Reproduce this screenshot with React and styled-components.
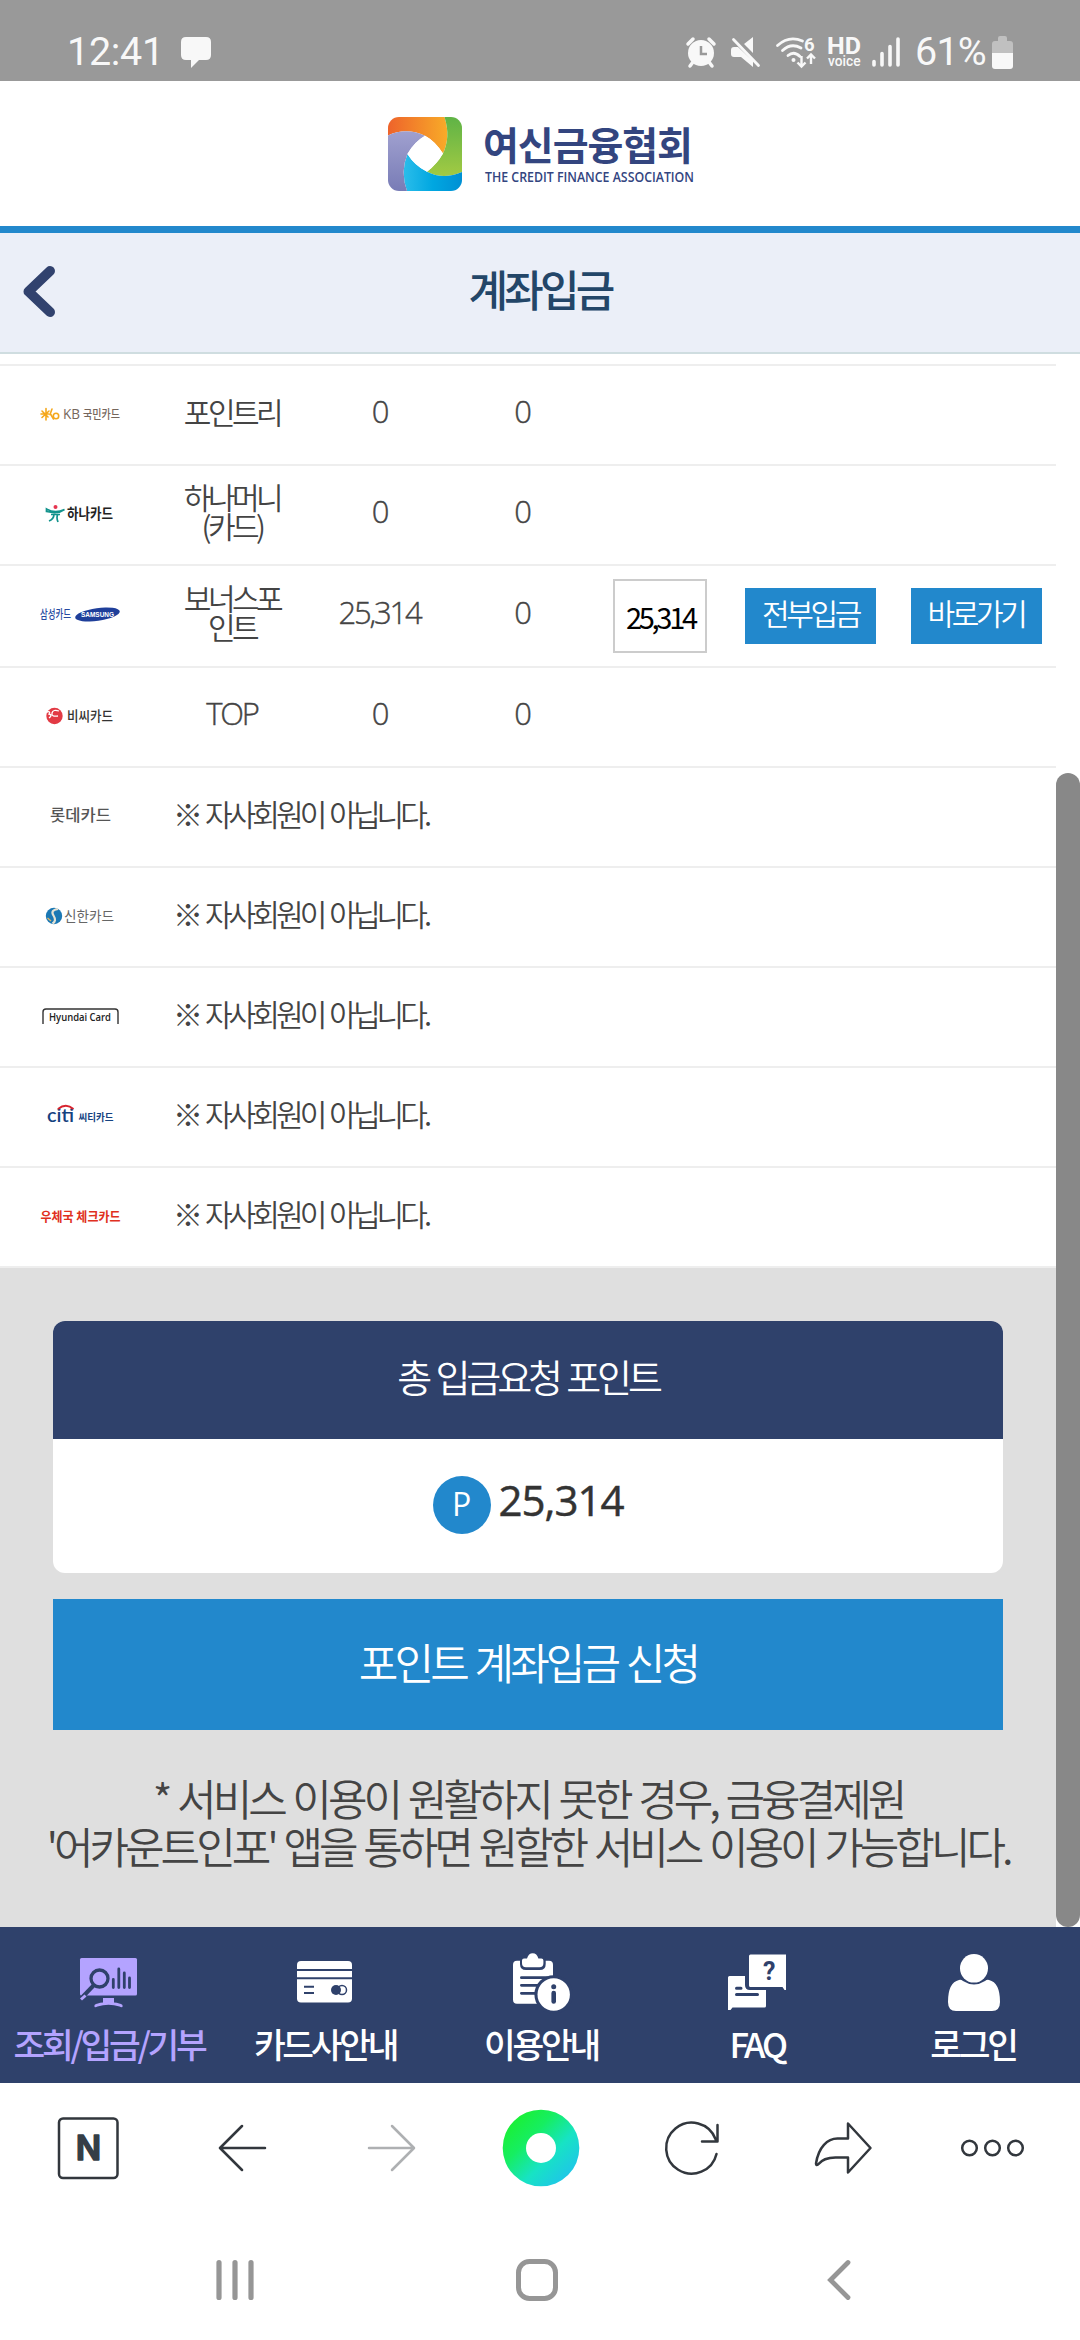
import React from "react";
import styled, { createGlobalStyle } from "styled-components";

const kr = `"Noto Sans CJK KR", sans-serif`;
const latin = `"Open Sans", "Noto Sans CJK KR", sans-serif`;

const GlobalStyle = createGlobalStyle`
  * { box-sizing: border-box; }
  body {
    margin: 0;
    background: #fff;
    font-family: ${kr};
  }
  svg { overflow: visible; }
`;

const Screen = styled.div`
  width: 1080px;
  height: 2340px;
  display: flex;
  flex-direction: column;
  background: #fff;
  overflow: hidden;
`;

/* ---------- status bar ---------- */

const StatusBar = styled.div`
  height: 81px;
  flex: none;
  display: flex;
  justify-content: space-between;
  padding: 30px 67px 0 67px;
  background: #999;
  color: #f8f8f8;
  font-family: Roboto, sans-serif;
`;

const StatusSide = styled.div`
  display: flex;
  height: 44px;
  align-items: center;
`;

const StatusText = styled.span`
  font-size: 39.5px;
  line-height: 44px;
  letter-spacing: ${(p) => p.$spacing || "0"};
`;

const StatusIcon = styled.svg`
  flex: none;
  margin-left: ${(p) => p.$left}px;
`;

/* ---------- header ---------- */

const Header = styled.header`
  height: 152px;
  flex: none;
  padding: 6px 0 0 6px;
  display: flex;
  justify-content: center;
  align-items: center;
  border-bottom: 7px solid #2288cc;
`;

const TitleBar = styled.div`
  height: 121px;
  flex: none;
  display: grid;
  grid-template-columns: 80px 1fr 80px;
  align-items: center;
  background: #ebeff8;
  border-bottom: 2px solid #cfdde0;
`;

const BackButton = styled.button`
  width: 80px;
  height: 60px;
  padding: 0 0 3px 20px;
  border: 0;
  background: none;
  display: flex;
  align-items: center;
`;

const Title = styled.h1`
  margin: 0;
  padding-bottom: 9px;
  font-size: 43px;
  font-weight: 500;
  line-height: 60px;
  letter-spacing: -3.8px;
  text-align: center;
  color: #234668;
`;

/* ---------- scroll area ---------- */

const ScrollArea = styled.main`
  height: 1573px;
  flex: none;
  display: flex;
`;

const Content = styled.div`
  width: 1056px;
  padding-top: 10px;
  display: flex;
  flex-direction: column;
`;

const ScrollTrack = styled.div`
  width: 24px;
  padding-top: 419px;
  display: flex;
`;

const ScrollThumb = styled.div`
  flex: 1;
  border-radius: 12px;
  background: #888;
`;

const CardList = styled.div`
  border-top: 2px solid #eee;
`;

const CardRow = styled.div`
  height: ${(p) => (p.$tall ? 102 : 100)}px;
  padding-left: 6px;
  display: grid;
  grid-template-columns: 148px 156px 139px 146px 130px 171px 160px;
  align-items: center;
  justify-items: center;
  border-bottom: 2px solid #eee;
`;

const Name = styled.div`
  padding-bottom: 8px;
  font-size: 30px;
  font-weight: 350;
  line-height: 29px;
  letter-spacing: -3.5px;
  text-align: center;
  white-space: pre-line;
  color: #444;
`;

const Value = styled.div`
  padding-bottom: 8px;
  font-family: ${latin};
  font-size: 31px;
  font-weight: 300;
  line-height: 40px;
  letter-spacing: -2.2px;
  color: #444;
  -webkit-text-stroke: 0.4px #444;
`;

const Notice = styled.div`
  grid-column: 2 / -1;
  justify-self: start;
  padding: 0 0 8px 19px;
  font-size: 30px;
  font-weight: 350;
  line-height: 40px;
  letter-spacing: -3.9px;
  word-spacing: 3px;
  color: #444;
`;

const AmountInput = styled.input`
  width: 94px;
  height: 74px;
  padding: 0 0 0 11px;
  border: 2px solid #ccc;
  border-radius: 0;
  outline: 0;
  background: #fff;
  font-family: ${kr};
  font-size: 29px;
  letter-spacing: -3.3px;
  color: #000;
`;

const SmallButton = styled.button`
  width: 131px;
  height: 56px;
  padding: 0 0 8px;
  border: 0;
  background: #2288cc;
  font-family: ${kr};
  font-size: 30px;
  font-weight: 350;
  line-height: 40px;
  letter-spacing: -3.4px;
  color: #fff;
`;

/* ---------- total ---------- */

const Summary = styled.section`
  flex: 1;
  padding: 53px 53px 0;
  background: #dfdfdf;
`;

const TotalCard = styled.div`
  border-radius: 12px;
  overflow: hidden;
  background: #fff;
`;

const TotalHead = styled.div`
  height: 118px;
  padding-bottom: 9px;
  display: flex;
  align-items: center;
  justify-content: center;
  background: #2f416b;
  font-size: 38px;
  font-weight: 350;
  letter-spacing: -4.1px;
  word-spacing: 3px;
  color: #fff;
`;

const TotalBody = styled.div`
  height: 134px;
  padding-bottom: 2px;
  display: flex;
  align-items: center;
  justify-content: center;
  gap: 8px;
`;

const PointBadge = styled.span`
  width: 58px;
  height: 58px;
  padding-bottom: 4px;
  display: flex;
  align-items: center;
  justify-content: center;
  border-radius: 50%;
  background: #2288cc;
  font-family: ${latin};
  font-size: 32px;
  color: #fff;
`;

const TotalValue = styled.strong`
  padding-bottom: 11px;
  font-family: ${latin};
  font-size: 42px;
  font-weight: 500;
  line-height: 50px;
  letter-spacing: -1px;
  color: #333;
  -webkit-text-stroke: 0.5px #333;
`;

const SubmitButton = styled.button`
  width: 100%;
  height: 131px;
  margin-top: 26px;
  padding: 0 0 8px;
  border: 0;
  background: #2288cc;
  font-family: ${kr};
  font-size: 43px;
  font-weight: 350;
  letter-spacing: -3.9px;
  word-spacing: 3px;
  color: #fff;
`;

const Guide = styled.p`
  margin: 43px -20px 0;
  font-size: 43px;
  font-weight: 350;
  line-height: 48px;
  letter-spacing: -4px;
  word-spacing: 3px;
  text-align: center;
  white-space: nowrap;
  color: #444;
`;

/* ---------- bottom bars ---------- */

const TabBar = styled.nav`
  height: 156px;
  flex: none;
  display: grid;
  grid-template-columns: repeat(5, 216px);
  background: #2f416b;
`;

const Tab = styled.a`
  padding: 25px 0 0 2px;
  display: flex;
  flex-direction: column;
  align-items: center;
  gap: 6px;
  font-size: 34.5px;
  font-weight: 500;
  line-height: 50px;
  letter-spacing: -3.3px;
  white-space: nowrap;
  color: ${(p) => (p.$active ? "#b4a3ff" : "#fff")};
`;

const BrowserBar = styled.div`
  height: 131px;
  flex: none;
  padding: 0 12px 2px 14px;
  display: grid;
  grid-template-columns: repeat(7, 1fr);
  align-items: center;
  justify-items: center;
`;

const SystemBar = styled.div`
  height: 126px;
  flex: none;
  padding: 5px 0 0 84px;
  display: grid;
  grid-template-columns: repeat(3, 302px);
  align-items: center;
  justify-items: center;
`;

const NAVY = "#2f416b";

/* ---------- logos ---------- */

const AssociationLogo = () => (
  <svg width="310" height="80" viewBox="0 0 310 80">
    <defs>
      <clipPath id="mark"><rect width="74" height="74" rx="11" /></clipPath>
      <linearGradient id="orange"><stop offset="0" stopColor="#ee632b" /><stop offset="1" stopColor="#f8ab28" /></linearGradient>
      <linearGradient id="green" x2="0" y2="1"><stop offset="0" stopColor="#5fb346" /><stop offset="1" stopColor="#a2ca43" /></linearGradient>
      <linearGradient id="blue"><stop offset="0" stopColor="#2bbdea" /><stop offset=".5" stopColor="#00a7e1" /><stop offset="1" stopColor="#0090d4" /></linearGradient>
      <linearGradient id="purple" x2="0" y2="1"><stop offset="0" stopColor="#a0a0cf" /><stop offset="1" stopColor="#787cb6" /></linearGradient>
    </defs>
    <g clipPath="url(#mark)">
      <rect width="74" height="74" fill="#fff" />
      <path d="M0 0H56.500C61 14 60 26 55 36.500Q47 24 37 18.700Q18 10 0 18.500Z" fill="url(#orange)" />
      <path d="M56.500 0H74V55Q55 63 39 54.700Q49 47 55 36.500C60 26 61 14 56.500 0Z" fill="url(#green)" />
      <path d="M74 55V74H19Q12 55 19.400 37Q27 49 39 54.700Q55 63 74 55Z" fill="url(#blue)" />
      <path d="M0 18.500Q18 10 37 18.700Q26 25 19.400 37Q12 55 19 74H0Z" fill="url(#purple)" />
      <path d="M37 18.700Q47 24 55 36.500Q49 47 39 54.700Q27 49 19.400 37Q26 25 37 18.700Z" fill="#fff" />
    </g>
    <text x="95" y="42.500" fontSize="39" fontWeight="700" textLength="210" fill="#33457f" fontFamily="Noto Sans CJK KR">여신금융협회</text>
    <text x="97" y="65" fontSize="14.500" fontWeight="600" textLength="209" lengthAdjust="spacingAndGlyphs" fill="#33457f" fontFamily="Open Sans">THE CREDIT FINANCE ASSOCIATION</text>
  </svg>
);

const LogoSvg = ({ children }) => (
  <svg width="84" height="26" viewBox="0 0 84 26" fontFamily="Noto Sans CJK KR">{children}</svg>
);

const logos = {
  kb: (
    <LogoSvg>
      <g stroke="#f5a81c" strokeWidth="1.600" fill="none" strokeLinecap="round">
        <path d="M4 9l6 6M4 15.500l7-6.500M8 6.500v11.500M3 12h7.500M14 7l-2 5.500M12.500 12l3 5" />
        <circle cx="18" cy="14" r="2.700" />
      </g>
      <text x="25" y="17" fontSize="14" textLength="17" lengthAdjust="spacingAndGlyphs" fill="#75665c" fontFamily="Open Sans">KB</text>
      <text x="45" y="16.500" fontSize="12.500" fontWeight="500" textLength="37" lengthAdjust="spacingAndGlyphs" fill="#75665c">국민카드</text>
    </LogoSvg>
  ),
  hana: (
    <LogoSvg>
      <circle cx="17.500" cy="5" r="2" fill="#e6344f" />
      <path d="M8.500 7Q17 12 26.500 7.500Q22 10.500 18.500 10.500Q15 11 8.500 9.500ZM13 12.500H22M16 12Q16 17 11 19M20 12Q18 15 20 20" stroke="#12938c" strokeWidth="1.700" fill="none" />
      <text x="29" y="17" fontSize="14.500" fontWeight="700" textLength="46" lengthAdjust="spacingAndGlyphs" fill="#222">하나카드</text>
    </LogoSvg>
  ),
  samsung: (
    <LogoSvg>
      <text x="2" y="16" fontSize="12.500" fontWeight="500" textLength="31" lengthAdjust="spacingAndGlyphs" fill="#2548a0">삼성카드</text>
      <ellipse cx="59.500" cy="11.500" rx="22.500" ry="6.300" transform="rotate(-8 59.500 11.500)" fill="#1f3f9a" />
      <text x="43" y="14.300" fontSize="7.500" fontWeight="700" textLength="33" lengthAdjust="spacingAndGlyphs" fill="#fff" fontFamily="Liberation Sans">SAMSUNG</text>
    </LogoSvg>
  ),
  bc: (
    <LogoSvg>
      <circle cx="16.500" cy="12" r="8.200" fill="#e23a44" />
      <path d="M21 7q-6-2-7 2t6 3M9 8q4-1 2 2q4 1 0 4" stroke="#fff" strokeWidth="1.300" fill="none" />
      <text x="29" y="17" fontSize="14" fontWeight="500" textLength="46" lengthAdjust="spacingAndGlyphs" fill="#333">비씨카드</text>
    </LogoSvg>
  ),
  lotte: (
    <LogoSvg>
      <text x="12" y="17" fontSize="15.500" fontWeight="500" textLength="61" lengthAdjust="spacingAndGlyphs" fill="#555">롯데카드</text>
    </LogoSvg>
  ),
  shinhan: (
    <LogoSvg>
      <circle cx="16" cy="12" r="8.200" fill="#1b78b4" />
      <path d="M20 5q-8 1-4.500 6.500t-1 8" stroke="#e5e2d4" strokeWidth="2.200" fill="none" />
      <path d="M9.500 14l3.500 3" stroke="#d8b36a" strokeWidth="1.500" />
      <text x="26" y="17" fontSize="14" textLength="50" lengthAdjust="spacingAndGlyphs" fill="#666">신한카드</text>
    </LogoSvg>
  ),
  hyundai: (
    <LogoSvg>
      <path d="M5 20V8q0-3 3-3h69q3 0 3 3v12" stroke="#333" strokeWidth="1.400" fill="none" />
      <text x="11" y="17" fontSize="11.500" fontWeight="600" textLength="62" lengthAdjust="spacingAndGlyphs" fill="#222" fontFamily="Open Sans">Hyundai Card</text>
    </LogoSvg>
  ),
  citi: (
    <LogoSvg>
      <text x="9" y="18" fontSize="18.500" fontWeight="600" textLength="27" lengthAdjust="spacingAndGlyphs" fill="#14427f" fontFamily="Lato">citi</text>
      <path d="M20 5q8-6.500 15.500 0" stroke="#d8232e" strokeWidth="1.900" fill="none" />
      <text x="40.500" y="17" fontSize="10" fontWeight="700" textLength="35" lengthAdjust="spacingAndGlyphs" fill="#14427f">씨티카드</text>
    </LogoSvg>
  ),
  post: (
    <LogoSvg>
      <text x="2.500" y="16.500" fontSize="13" fontWeight="700" textLength="80" lengthAdjust="spacingAndGlyphs" fill="#e0301e">우체국 체크카드</text>
    </LogoSvg>
  ),
};

/* ---------- tab icons ---------- */

const TabIcon = ({ children }) => (
  <svg width="60" height="60" viewBox="0 0 60 60" fill="currentColor">{children}</svg>
);

const MonitorIcon = () => (
  <TabIcon>
    <rect x="1" y="6" width="57" height="37.500" rx="1.500" />
    <path d="M24 46h11v4.500q6 .5 8.500 2.500v2q-1.500.5-3-.5-11-3.500-22 0-2 1-3 .5v-2q2.500-2 8.500-2.500Z" />
    <path d="M15 33L3.500 45" stroke={NAVY} strokeWidth="4" />
    <path d="M6.500 43.500L2 47.500" stroke="currentColor" strokeWidth="3" />
    <circle cx="20.500" cy="26.500" r="8.500" fill="none" stroke={NAVY} strokeWidth="3.300" />
    <path d="M34.300 27.500v8M39.800 17v18.500M45.300 21v14.500M50.500 26v9.500" stroke={NAVY} strokeWidth="2.800" strokeLinecap="round" />
  </TabIcon>
);

const CreditIcon = () => (
  <TabIcon>
    <rect x="2" y="9" width="55" height="41.500" rx="4" />
    <path d="M2 18h55M2 26.200h55M9 34.700h10M9 41h10" stroke={NAVY} strokeWidth="2" />
    <circle cx="41" cy="38" r="5" fill={NAVY} />
    <circle cx="47" cy="38" r="4.500" fill="none" stroke={NAVY} strokeWidth="1.500" />
  </TabIcon>
);

const GuideIcon = () => (
  <TabIcon>
    <path d="M6 8.700H38q4 0 4 4V51.700H6q-4 0-4-4V12.700q0-4 4-4Z" />
    <path d="M9 4H34.700v8q0 6-6 6H15q-6 0-6-6Z" fill={NAVY} />
    <path d="M11 8.500q0-2 2-2h3q1.500-5.200 5.700-5.200t5.700 5.200h3q2 0 2 2v2.800q0 4-4 4H15q-4 0-4-4Z" />
    <path d="M10.400 25.700h26M10.400 33.300h17M10.400 41.300h15" stroke={NAVY} strokeWidth="2.800" strokeLinecap="round" />
    <circle cx="42.700" cy="42.500" r="19.300" fill={NAVY} />
    <circle cx="42.700" cy="42.500" r="16.200" />
    <circle cx="42.700" cy="34.700" r="2.500" fill={NAVY} />
    <path d="M42.700 41v8.500" stroke={NAVY} strokeWidth="4.600" strokeLinecap="round" />
  </TabIcon>
);

const FaqIcon = () => (
  <TabIcon>
    <path d="M1 25.500q0-1.500 1.500-1.500H18v9q0 5 5 5H39v16q0 1.500-1.500 1.500H5.500L3.500 58H1Z" />
    <path d="M9.500 36.200h4.500M9.500 42.600h21" stroke={NAVY} strokeWidth="3" strokeLinecap="round" />
    <path d="M23.500 2.500H59V38h-1.500L55.500 35H23.500q-1.500 0-1.500-1.500V4q0-1.500 1.500-1.500Z" />
    <text x="40.500" y="27.500" textAnchor="middle" fontSize="25" fontWeight="700" fill={NAVY} fontFamily="Roboto">?</text>
  </TabIcon>
);

const UserIcon = () => (
  <TabIcon>
    <ellipse cx="31" cy="16.300" rx="14" ry="14.300" />
    <path d="M16 28q2-.6 4 1 11 7 22 0 2-1.600 4-1 11 2.500 11 22 0 9-8 9H13q-8 0-8-9 0-19.500 11-22Z" />
  </TabIcon>
);

const rows = [
  { logo: "kb", name: "포인트리", point: "0", applied: "0" },
  { logo: "hana", name: "하나머니\n(카드)", point: "0", applied: "0" },
  { logo: "samsung", name: "보너스포\n인트", point: "25,314", applied: "0", input: "25,314" },
  { logo: "bc", name: "TOP", point: "0", applied: "0" },
  { logo: "lotte" },
  { logo: "shinhan" },
  { logo: "hyundai" },
  { logo: "citi" },
  { logo: "post" },
];

const tabs = [
  { label: "조회/입금/기부", icon: <MonitorIcon />, active: true },
  { label: "카드사안내", icon: <CreditIcon /> },
  { label: "이용안내", icon: <GuideIcon /> },
  { label: "FAQ", icon: <FaqIcon /> },
  { label: "로그인", icon: <UserIcon /> },
];

function Status() {
  return (
    <StatusBar>
      <StatusSide>
        <StatusText $spacing="-.3px">12:41</StatusText>
        <StatusIcon $left={17} width="30" height="31" viewBox="0 0 30 31" fill="currentColor">
          <path d="M5 0h20q5 0 5 5v13q0 5-5 5h-7l-8 8v-8H5q-5 0-5-5V5q0-5 5-5Z" />
        </StatusIcon>
      </StatusSide>
      <StatusSide>
        <StatusIcon $left={0} width="30" height="30" viewBox="0 0 30 30">
          <circle cx="15" cy="16" r="13" fill="currentColor" />
          <path d="M2 7l5-5M28 7l-5-5M7 25l-3 4M23 25l3 4" stroke="currentColor" strokeWidth="3.500" strokeLinecap="round" />
          <path d="M15 9v8h6" stroke="#999" strokeWidth="2.500" fill="none" />
        </StatusIcon>
        <StatusIcon $left={15} width="30" height="30" viewBox="0 0 30 30">
          <path d="M0 13q0-3 3-3h4L22 24v6L10 20H3q-3 0-3-3ZM13 7l9-7v16Z" fill="currentColor" />
          <path d="M4.500 0.500l25 26" stroke="#999" strokeWidth="2.500" />
          <path d="M2.500 2.500l25 26" stroke="currentColor" strokeWidth="2.800" strokeLinecap="round" />
        </StatusIcon>
        <StatusIcon $left={15} width="40" height="31" viewBox="0 0 40 31">
          <path d="M1.500 8.500Q13-2 26.500 4M6.500 13.500Q15 5.500 25 11M12 18.500q6-5 12 1" stroke="currentColor" strokeWidth="2.800" fill="none" strokeLinecap="round" />
          <circle cx="17.500" cy="23" r="2" fill="currentColor" />
          <path d="M25.500 19v10M21.500 25.500l4 4 4-4M35 27V18M31 21.500l4-4 4 4" stroke="currentColor" strokeWidth="2.400" fill="none" />
          <text x="28" y="14" fontSize="18.500" fontWeight="700" fill="currentColor" fontFamily="Roboto">6</text>
        </StatusIcon>
        <StatusIcon $left={12} width="34" height="31" viewBox="0 0 34 31" fill="currentColor" fontFamily="Roboto">
          <text x="-1" y="16.500" fontSize="23" fontWeight="700" textLength="34" lengthAdjust="spacingAndGlyphs">HD</text>
          <text x="0" y="29" fontSize="14.500" fontWeight="500" textLength="32.500" lengthAdjust="spacingAndGlyphs">voice</text>
        </StatusIcon>
        <StatusIcon $left={9} width="30" height="30" viewBox="0 0 30 30">
          <path d="M3 24.500v3.500M11 16.500v11.500M19 9.500v18.500M27 2v26" stroke="currentColor" strokeWidth="3.600" strokeLinecap="round" />
        </StatusIcon>
        <StatusIcon as="span" $left={14}><StatusText $spacing="-.8px">61%</StatusText></StatusIcon>
        <StatusIcon $left={6} width="21" height="33" viewBox="0 0 21 33">
          <path d="M6 2q0-2 2-2h5q2 0 2 2v3h3q3 0 3 3v9H0V8q0-3 3-3h3Z" fill="#c0c0c0" />
          <path d="M0 17h21v13q0 3-3 3H3q-3 0-3-3Z" fill="currentColor" />
        </StatusIcon>
      </StatusSide>
    </StatusBar>
  );
}

function Browser() {
  const line = { fill: "none", stroke: "#32373d", strokeWidth: 2.5, strokeLinecap: "round", strokeLinejoin: "round" };
  return (
    <BrowserBar>
      <svg width="62" height="62" viewBox="0 0 62 62">
        <rect x="1" y="1.500" width="58.500" height="59.500" rx="4" {...line} />
        <text x="30.500" y="43.300" textAnchor="middle" fontSize="33.500" fontWeight="600" fontFamily="Inter" fill="#353e47" stroke="#353e47" strokeWidth="1.500" strokeLinejoin="round">N</text>
      </svg>
      <svg width="48" height="48" viewBox="-2 0 48 48">
        <path d="M47 24H2.500M24 2L2 24l22 22" {...line} />
      </svg>
      <svg width="48" height="48" viewBox="-2 0 48 48">
        <path d="M1 24h44.500M24 2l22 22-22 22" {...line} stroke="#aeb0b2" />
      </svg>
      <svg width="78" height="78" viewBox="0 0 78 78">
        <defs>
          <linearGradient id="ring" x1=".1" y1=".1" x2=".95" y2=".95">
            <stop offset="0" stopColor="#1bf02f" />
            <stop offset=".3" stopColor="#16ee60" />
            <stop offset=".6" stopColor="#17e3c4" />
            <stop offset="1" stopColor="#21bdf3" />
          </linearGradient>
        </defs>
        <path d="M39 .7a38.300 38.300 0 1 1 0 76.600a38.300 38.300 0 1 1 0-76.600Z" fill="url(#ring)" />
        <circle cx="39" cy="39" r="15" fill="#fff" />
      </svg>
      <svg width="56" height="56" viewBox="0 0 56 56">
        <path d="M52.500 34A25.500 25.500 0 1 1 51.500 19L53 21.500M38 21.500H53.500V5" {...line} />
      </svg>
      <svg width="60" height="56" viewBox="-1.500 0 60 56">
        <path d="M34.500 3.500L57 28 34.500 52.500V37.500H22Q10 37.500 4.500 44.500Q2.500 46 2.500 43.500C5 27 14 18.500 24 18.500H34.500Z" {...line} />
      </svg>
      <svg width="64" height="20" viewBox="0 0 64 20">
        <circle cx="8.500" cy="10" r="7.300" {...line} />
        <circle cx="31.500" cy="10" r="7.300" {...line} />
        <circle cx="54.500" cy="10" r="7.300" {...line} />
      </svg>
    </BrowserBar>
  );
}

export default function App() {
  return (
    <Screen>
      <GlobalStyle />
      <Status />
      <Header>
        <AssociationLogo />
      </Header>
      <TitleBar>
        <BackButton aria-label="뒤로">
          <svg width="40" height="56" viewBox="0 0 40 56">
            <path d="M30 8L8.500 28.500 30 49" stroke="#31426e" strokeWidth="10" fill="none" strokeLinecap="round" strokeLinejoin="round" />
          </svg>
        </BackButton>
        <Title>계좌입금</Title>
      </TitleBar>

      <ScrollArea>
        <Content>
          <CardList>
            {rows.map((row) => (
              <CardRow key={row.logo} $tall={!!row.input}>
                {logos[row.logo]}
                {row.name ? (
                  <>
                    {row.name === "TOP" ? <Value>{row.name}</Value> : <Name>{row.name}</Name>}
                    <Value>{row.point}</Value>
                    <Value>{row.applied}</Value>
                  </>
                ) : (
                  <Notice>※ 자사회원이 아닙니다.</Notice>
                )}
                {row.input && (
                  <>
                    <AmountInput defaultValue={row.input} />
                    <SmallButton>전부입금</SmallButton>
                    <SmallButton>바로가기</SmallButton>
                  </>
                )}
              </CardRow>
            ))}
          </CardList>
          <Summary>
            <TotalCard>
              <TotalHead>총 입금요청 포인트</TotalHead>
              <TotalBody>
                <PointBadge>P</PointBadge>
                <TotalValue>25,314</TotalValue>
              </TotalBody>
            </TotalCard>
            <SubmitButton>포인트 계좌입금 신청</SubmitButton>
            <Guide>
              * 서비스 이용이 원활하지 못한 경우, 금융결제원
              <br />
              '어카운트인포' 앱을 통하면 원할한 서비스 이용이 가능합니다.
            </Guide>
          </Summary>
        </Content>
        <ScrollTrack>
          <ScrollThumb />
        </ScrollTrack>
      </ScrollArea>

      <TabBar>
        {tabs.map((tab) => (
          <Tab key={tab.label} $active={tab.active}>
            {tab.icon}
            {tab.label}
          </Tab>
        ))}
      </TabBar>
      <Browser />
      <SystemBar>
        <svg width="40" height="42" viewBox="0 0 40 42">
          <path d="M4 3.500v35M20 3.500v35M36 3.500v35" stroke="#969696" strokeWidth="5.200" strokeLinecap="round" />
        </svg>
        <svg width="42" height="42" viewBox="0 0 42 42">
          <rect x="2.500" y="2.500" width="37" height="37" rx="11" fill="none" stroke="#969696" strokeWidth="5" />
        </svg>
        <svg width="24" height="42" viewBox="0 0 24 42">
          <path d="M21 3.500L3.500 21 21 38.500" fill="none" stroke="#969696" strokeWidth="4.800" strokeLinecap="round" />
        </svg>
      </SystemBar>
    </Screen>
  );
}
